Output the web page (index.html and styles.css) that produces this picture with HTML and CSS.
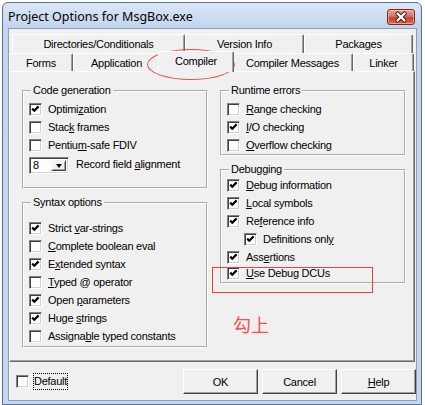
FILE: index.html
```html
<!DOCTYPE html>
<html>
<head>
<meta charset="utf-8">
<title>Project Options for MsgBox.exe</title>
<link rel="stylesheet" href="styles.css">
</head>
<body>
<div class="window">
  <div class="titlebar">
    <div class="title">Project Options for MsgBox.exe</div>
    <div class="close">
      <svg width="28" height="16" viewBox="0 0 28 16">
        <path d="M10.5 4.5L17.5 11.5M17.5 4.5L10.5 11.5" stroke="#5a1d14" stroke-width="4.2" stroke-linecap="round"/>
        <path d="M10.5 4.5L17.5 11.5M17.5 4.5L10.5 11.5" stroke="#fff" stroke-width="2.2" stroke-linecap="round"/>
      </svg>
    </div>
  </div>
  <div class="client">
    <div class="tabs">
      <div class="tabrow back">
        <div class="tab w-dir">Directories/Conditionals</div>
        <div class="tab w-ver">Version Info</div>
        <div class="tab w-pkg">Packages</div>
      </div>
      <div class="tabrow front">
        <div class="tab w-forms">Forms</div>
        <div class="tab w-app">Application</div>
        <div class="tab w-comp active">Compiler</div>
        <div class="tab w-msg">Compiler Messages</div>
        <div class="tab w-link">Linker</div>
      </div>
    </div>
    <div class="page">
      <div class="col">
        <fieldset class="group g-code">
          <legend>Code generation</legend>
          <div class="check"><span class="box"><svg viewBox="0 0 11 11"><path d="M2.2 4.6L4.3 6.7L8.6 2.4"/></svg></span><span>Optimi<u>z</u>ation</span></div>
          <div class="check"><span class="box"></span><span>Stac<u>k</u> frames</span></div>
          <div class="check"><span class="box"></span><span>Pentiu<u>m</u>-safe FDIV</span></div>
          <div class="combo-row">
            <div class="combo"><span class="combo-val">8</span><span class="drop"><span class="tri"></span></span></div>
            <span class="combo-label">Record field <u>a</u>lignment</span>
          </div>
        </fieldset>
        <fieldset class="group g-syntax">
          <legend>Syntax options</legend>
          <div class="check"><span class="box"><svg viewBox="0 0 11 11"><path d="M2.2 4.6L4.3 6.7L8.6 2.4"/></svg></span><span>Strict <u>v</u>ar-strings</span></div>
          <div class="check"><span class="box"></span><span><u>C</u>omplete boolean eval</span></div>
          <div class="check"><span class="box"><svg viewBox="0 0 11 11"><path d="M2.2 4.6L4.3 6.7L8.6 2.4"/></svg></span><span>E<u>x</u>tended syntax</span></div>
          <div class="check"><span class="box"></span><span><u>T</u>yped @ operator</span></div>
          <div class="check"><span class="box"><svg viewBox="0 0 11 11"><path d="M2.2 4.6L4.3 6.7L8.6 2.4"/></svg></span><span>Open <u>p</u>arameters</span></div>
          <div class="check"><span class="box"><svg viewBox="0 0 11 11"><path d="M2.2 4.6L4.3 6.7L8.6 2.4"/></svg></span><span>Huge <u>s</u>trings</span></div>
          <div class="check"><span class="box"></span><span>Assigna<u>b</u>le typed constants</span></div>
        </fieldset>
      </div>
      <div class="col">
        <fieldset class="group g-runtime">
          <legend>Runtime errors</legend>
          <div class="check"><span class="box"></span><span><u>R</u>ange checking</span></div>
          <div class="check"><span class="box"><svg viewBox="0 0 11 11"><path d="M2.2 4.6L4.3 6.7L8.6 2.4"/></svg></span><span><u>I</u>/O checking</span></div>
          <div class="check"><span class="box"></span><span><u>O</u>verflow checking</span></div>
        </fieldset>
        <fieldset class="group g-debug">
          <legend>Debugging</legend>
          <div class="check"><span class="box"><svg viewBox="0 0 11 11"><path d="M2.2 4.6L4.3 6.7L8.6 2.4"/></svg></span><span><u>D</u>ebug information</span></div>
          <div class="check"><span class="box"><svg viewBox="0 0 11 11"><path d="M2.2 4.6L4.3 6.7L8.6 2.4"/></svg></span><span><u>L</u>ocal symbols</span></div>
          <div class="check"><span class="box"><svg viewBox="0 0 11 11"><path d="M2.2 4.6L4.3 6.7L8.6 2.4"/></svg></span><span>Re<u>f</u>erence info</span></div>
          <div class="check sub"><span class="box"><svg viewBox="0 0 11 11"><path d="M2.2 4.6L4.3 6.7L8.6 2.4"/></svg></span><span>Definitions onl<u>y</u></span></div>
          <div class="check"><span class="box"><svg viewBox="0 0 11 11"><path d="M2.2 4.6L4.3 6.7L8.6 2.4"/></svg></span><span>Ass<u>e</u>rtions</span></div>
          <div class="check last"><span class="box"><svg viewBox="0 0 11 11"><path d="M2.2 4.6L4.3 6.7L8.6 2.4"/></svg></span><span><u>U</u>se Debug DCUs</span></div>
        </fieldset>
      </div>
    </div>
    <div class="bottom">
      <div class="check default"><span class="box"></span><span class="focus">Default</span></div>
      <div class="buttons">
        <button class="btn">OK</button>
        <button class="btn">Cancel</button>
        <button class="btn"><u>H</u>elp</button>
      </div>
    </div>
  </div>
</div>
<div class="mark ellipse"></div>
<div class="mark rect"></div>
<div class="mark note">勾上</div>
</body>
</html>
```
FILE: styles.css
```css
* { box-sizing: border-box; }
html, body { margin: 0; padding: 0; background: #fff; }
body {
  width: 425px;
  height: 405px;
  overflow: hidden;
  position: relative;
  font-family: "Liberation Sans", Arial, sans-serif;
  font-size: 11px;
  letter-spacing: -0.25px;
  color: #000;
}
u { text-decoration: underline; text-underline-offset: 1px; }

.window {
  margin: 2px 0 0 2px;
  width: 420px;
  height: 403px;
  border: 1px solid #5a7292;
  border-radius: 6px 6px 0 0;
  background: linear-gradient(#dae7f6, #c2d5ed 25px, #c6d8ee);
  padding: 0 4px 3px 5px;
  display: flex;
  flex-direction: column;
}
.titlebar {
  height: 25px;
  display: flex;
  align-items: center;
  justify-content: space-between;
}
.title {
  font-family: "Noto Sans", "Open Sans", sans-serif;
  font-size: 12.5px;
  letter-spacing: 0;
  padding-left: 0;
  padding-top: 1px;
  color: #000;
}
.close {
  width: 28px;
  height: 16px;
  margin-top: 3px;
  margin-right: 2px;
  border: 1px solid #7a2a20;
  border-radius: 3px;
  background: linear-gradient(#eaa497, #d9705f 45%, #c44631 55%, #d26a4e);
  box-shadow: inset 0 0 0 1px rgba(255, 220, 210, 0.5);
}
.close svg { display: block; margin: -1px 0 0 -1px; }

.client {
  flex: 1;
  border: 1px solid #8b9fba;
  background: #f0f0f0;
  padding-top: 5px;
  display: flex;
  flex-direction: column;
}

.tabs { height: 37px; display: flex; flex-direction: column; }
.tabrow { display: flex; }
.tabrow.back { height: 19px; padding-left: 3px; }
.tabrow.front { height: 18px; }
.tab {
  height: 100%;
  border-top: 1px solid #fff;
  border-left: 1px solid #fff;
  border-right: 1px solid #696969;
  box-shadow: inset -1px 0 #a0a0a0;
  border-radius: 2px 2px 0 0;
  display: flex;
  align-items: center;
  justify-content: center;
  background: #f0f0f0;
}
.w-dir { width: 173px; }
.w-ver { width: 119px; }
.w-pkg { width: 109px; }
.w-forms { width: 64px; }
.w-app { width: 87px; }
.w-comp { width: 72px; }
.w-msg { width: 121px; }
.w-link { width: 61px; }
.tab.active {
  width: 76px;
  margin: -2px -2px -1px -2px;
  height: 21px;
  position: relative;
  z-index: 1;
  padding-bottom: 3px;
}

.page {
  height: 291px;
  margin-right: 1px;
  border-top: 1px solid #fff;
  border-left: 1px solid #fff;
  border-right: 1px solid #696969;
  border-bottom: 1px solid #696969;
  box-shadow: inset -1px -1px #a0a0a0;
  display: grid;
  grid-template-columns: 186px 186px;
  column-gap: 12px;
  padding-left: 12px;
  align-content: start;
}
.col { display: flex; flex-direction: column; }

.group {
  margin: 0;
  min-width: 0;
  border: 2px groove #fff;
  padding: 0;
}
.group legend {
  margin-left: 7px;
  padding: 0 2px;
  line-height: 13px;
}
.g-code { margin-top: 12px; padding-top: 3px; padding-bottom: 13px; }
.g-syntax { margin-top: 7px; padding-top: 10px; padding-bottom: 1px; }
.g-runtime { margin-top: 12px; padding-top: 3px; padding-bottom: 0; }
.g-debug { margin-top: 7px; padding-top: 0; padding-bottom: 0; }

.check {
  display: flex;
  align-items: center;
  height: 18px;
  padding-left: 5px;
  gap: 6px;
  white-space: nowrap;
}
.check.sub { padding-left: 22px; }
.check.last { margin-top: -2px; }
.box {
  flex: none;
  width: 13px;
  height: 13px;
  background: #fff;
  border: 1px solid;
  border-color: #808080 #fff #fff #808080;
  box-shadow: inset 1px 1px #404040, inset -1px -1px #d4d0c8;
}
.box svg {
  display: block;
  width: 11px;
  height: 11px;
  fill: none;
  stroke: #000;
  stroke-width: 2.2;
}

.combo-row {
  display: flex;
  align-items: center;
  margin-top: 3px;
  height: 17px;
  padding-left: 5px;
  gap: 7px;
}
.combo {
  width: 40px;
  height: 17px;
  display: flex;
  align-items: stretch;
  background: #fff;
  border: 1px solid;
  border-color: #808080 #fff #fff #808080;
  box-shadow: inset 1px 1px #404040, inset -1px -1px #d4d0c8;
  padding: 2px;
}
.combo-val { flex: 1; line-height: 11px; padding-left: 1px; }
.drop {
  width: 15px;
  background: #f0f0f0;
  border: 1px solid;
  border-color: #f0f0f0 #404040 #404040 #f0f0f0;
  box-shadow: inset 1px 1px #fff, inset -1px -1px #a0a0a0;
  display: flex;
  align-items: center;
  justify-content: center;
}
.tri {
  width: 0;
  height: 0;
  border-left: 3.5px solid transparent;
  border-right: 3.5px solid transparent;
  border-top: 4px solid #000;
  margin-top: 1px;
}
.combo-label { margin-bottom: 3px; }

.bottom {
  height: 38px;
  display: flex;
  align-items: center;
  justify-content: space-between;
  padding-left: 7px;
}
.check.default { padding-left: 0; gap: 4px; }
.focus {
  border: 1px dotted #000;
  line-height: 15px;
  padding: 0 0 0 0;
}
.buttons { display: flex; gap: 4px; padding-top: 1px; }
.btn {
  width: 75px;
  height: 25px;
  font: inherit;
  letter-spacing: inherit;
  color: #000;
  background: #f0f0f0;
  border: 1px solid;
  border-color: #fff #404040 #404040 #fff;
  box-shadow: inset -1px -1px #a0a0a0;
  padding: 0;
}

.mark { position: absolute; pointer-events: none; }
.ellipse {
  left: 147px;
  top: 49px;
  width: 88px;
  height: 31px;
  border: 1px solid #e5524c;
  border-radius: 50%;
}
.rect {
  left: 212px;
  top: 267px;
  width: 161px;
  height: 26px;
  border: 1px solid #ef3e3e;
}
.note {
  left: 233px;
  top: 312px;
  font-family: "Noto Sans CJK SC", sans-serif;
  font-size: 18px;
  line-height: 24px;
  letter-spacing: 0;
  color: #ff4d4d;
}
```
